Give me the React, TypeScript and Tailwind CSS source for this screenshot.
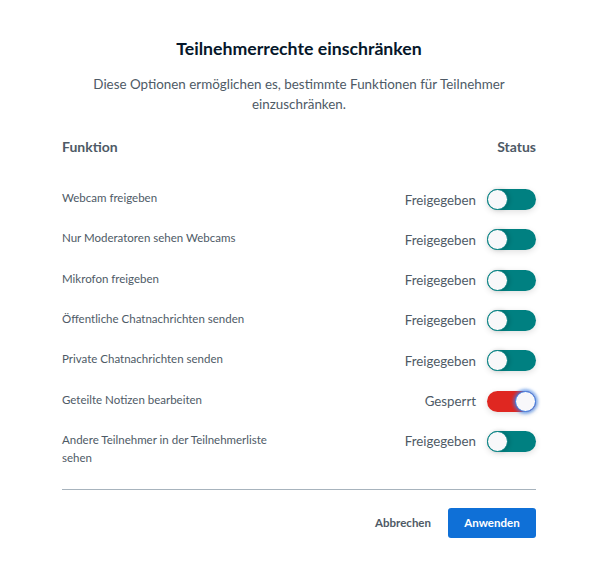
import React from "react";

const rows: { label: string; locked: boolean }[] = [
  { label: "Webcam freigeben", locked: false },
  { label: "Nur Moderatoren sehen Webcams", locked: false },
  { label: "Mikrofon freigeben", locked: false },
  { label: "Öffentliche Chatnachrichten senden", locked: false },
  { label: "Private Chatnachrichten senden", locked: false },
  { label: "Geteilte Notizen bearbeiten", locked: true },
  { label: "Andere Teilnehmer in der Teilnehmerliste sehen", locked: false },
];

function Toggle({ locked }: { locked: boolean }) {
  if (locked) {
    return (
      <div className="relative w-[49px] h-[21px] rounded-full bg-[#df2721] shadow-[0_2px_6px_rgba(0,0,0,0.12)]">
        <div className="absolute right-0 top-0 w-[21px] h-[21px] rounded-full bg-[#f8f8fa] border border-[#3a7fe6] shadow-[0_0_3px_2px_rgba(58,127,230,0.6)]" />
      </div>
    );
  }
  return (
    <div className="relative w-[49px] h-[21px] rounded-full bg-[#008081] shadow-[0_2px_6px_rgba(0,0,0,0.12)]">
      <div className="absolute left-0 top-0 w-[21px] h-[21px] rounded-full bg-[#f8f8fa] border border-[#008081] shadow-[2px_0_4px_rgba(0,0,0,0.15)]" />
    </div>
  );
}

export default function App() {
  return (
    <div
      className="w-[597px] h-[572px] bg-white pl-[62px] pr-[61px] pt-[37px]"
      style={{ fontFamily: "Lato, 'Open Sans', sans-serif" }}
    >
      <h1 className="text-center text-[17.7px] leading-[24px] font-bold text-[#06172a]">
        Teilnehmerrechte einschränken
      </h1>
      <p className="mt-[13px] text-center text-[13.4px] leading-[20px] text-[#4e5a66]">
        Diese Optionen ermöglichen es, bestimmte Funktionen für Teilnehmer einzuschränken.
      </p>
      <div className="mt-[23px] flex justify-between text-[14px] leading-[20px] font-bold text-[#4e5a66]">
        <span>Funktion</span>
        <span>Status</span>
      </div>
      <div className="mt-[32px] flex flex-col">
        {rows.map((r, i) => (
          <div
            key={i}
            className={`flex justify-between items-start ${i === rows.length - 1 ? "" : "h-[40.33px]"}`}
          >
            <span className="text-[11.5px] leading-[18px] text-[#4e5a66] w-[225px]">{r.label}</span>
            <div className="flex items-center gap-[11px]">
              <span className="text-[13.3px] leading-[20px] text-[#4e5a66]">
                {r.locked ? "Gesperrt" : "Freigegeben"}
              </span>
              <Toggle locked={r.locked} />
            </div>
          </div>
        ))}
      </div>
      <div className="mt-[22px] border-t border-[#a7b3bd]" />
      <div className="mt-[18px] flex justify-end items-center gap-[17px]">
        <button className="text-[11.5px] font-bold text-[#4e5a66]">Abbrechen</button>
        <button className="w-[88px] h-[30px] rounded-[3px] bg-[#0f70d7] text-white text-[11.5px] font-bold">
          Anwenden
        </button>
      </div>
    </div>
  );
}
